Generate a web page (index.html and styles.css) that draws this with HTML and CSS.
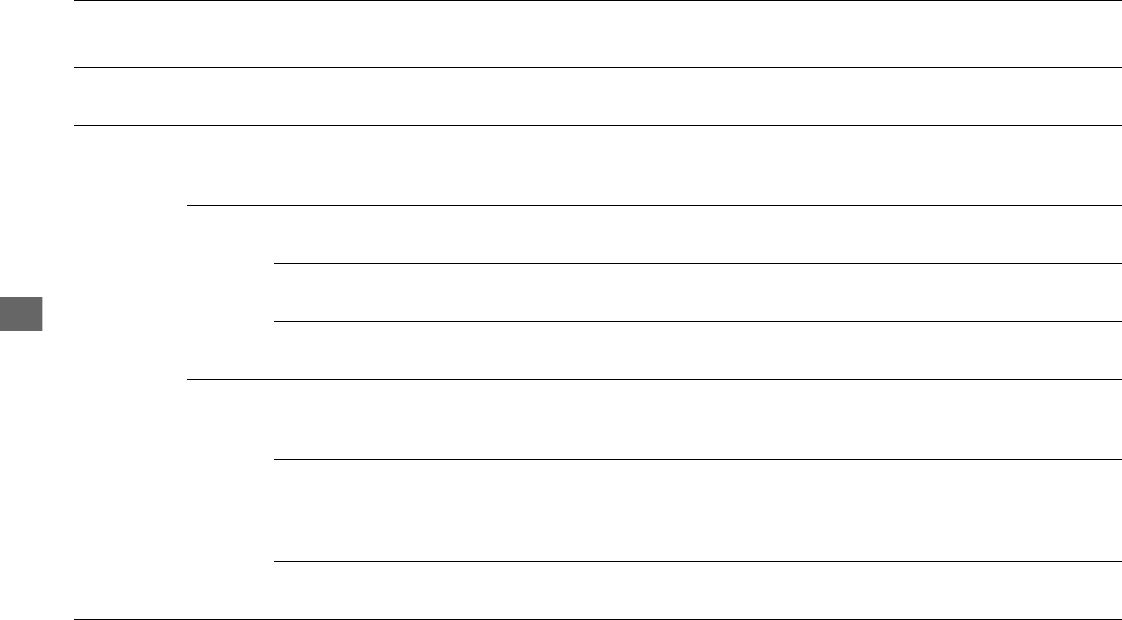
FILE: index.html
```html
<!DOCTYPE html>
<html lang="en">
<head>
<meta charset="utf-8">
<title>Table</title>
<link rel="stylesheet" href="styles.css">
</head>
<body>
<div class="thumb-tab"></div>
<div class="sheet">
  <div class="row h67"></div>
  <div class="row h58"></div>
  <div class="group">
    <div class="col1"></div>
    <div class="stack">
      <div class="cell h79"></div>
      <div class="subgroup">
        <div class="col2"></div>
        <div class="stack">
          <div class="cell h57"></div>
          <div class="row h58"></div>
          <div class="row h58"></div>
        </div>
      </div>
      <div class="subgroup">
        <div class="col2"></div>
        <div class="stack">
          <div class="cell h79"></div>
          <div class="row h102"></div>
          <div class="row h58"></div>
        </div>
      </div>
    </div>
  </div>
</div>
</body>
</html>
```
FILE: styles.css
```css
* { box-sizing: border-box; }
html, body { margin: 0; padding: 0; background: #ffffff; }
body { font-family: "Liberation Sans", Arial, sans-serif; width: 1122px; height: 620px; overflow: hidden; }

.sheet {
  margin-left: 74px;
  width: 1048px;
  border-bottom: 1px solid #000;
}
.row { border-top: 1px solid #000; }
.group, .subgroup { display: flex; border-top: 1px solid #000; }
.col1 { width: 113px; flex: none; }
.col2 { width: 87px; flex: none; }
.stack { flex: 1; display: flex; flex-direction: column; }

.h57 { height: 57px; }
.h58 { height: 58px; }
.h67 { height: 67px; }
.h79 { height: 79px; }
.h102 { height: 102px; }

.thumb-tab {
  position: absolute;
  left: 0;
  top: 297px;
  width: 43px;
  height: 34px;
  background: #666666;
  border-right: 1px solid #c8c8c8;
}
```
